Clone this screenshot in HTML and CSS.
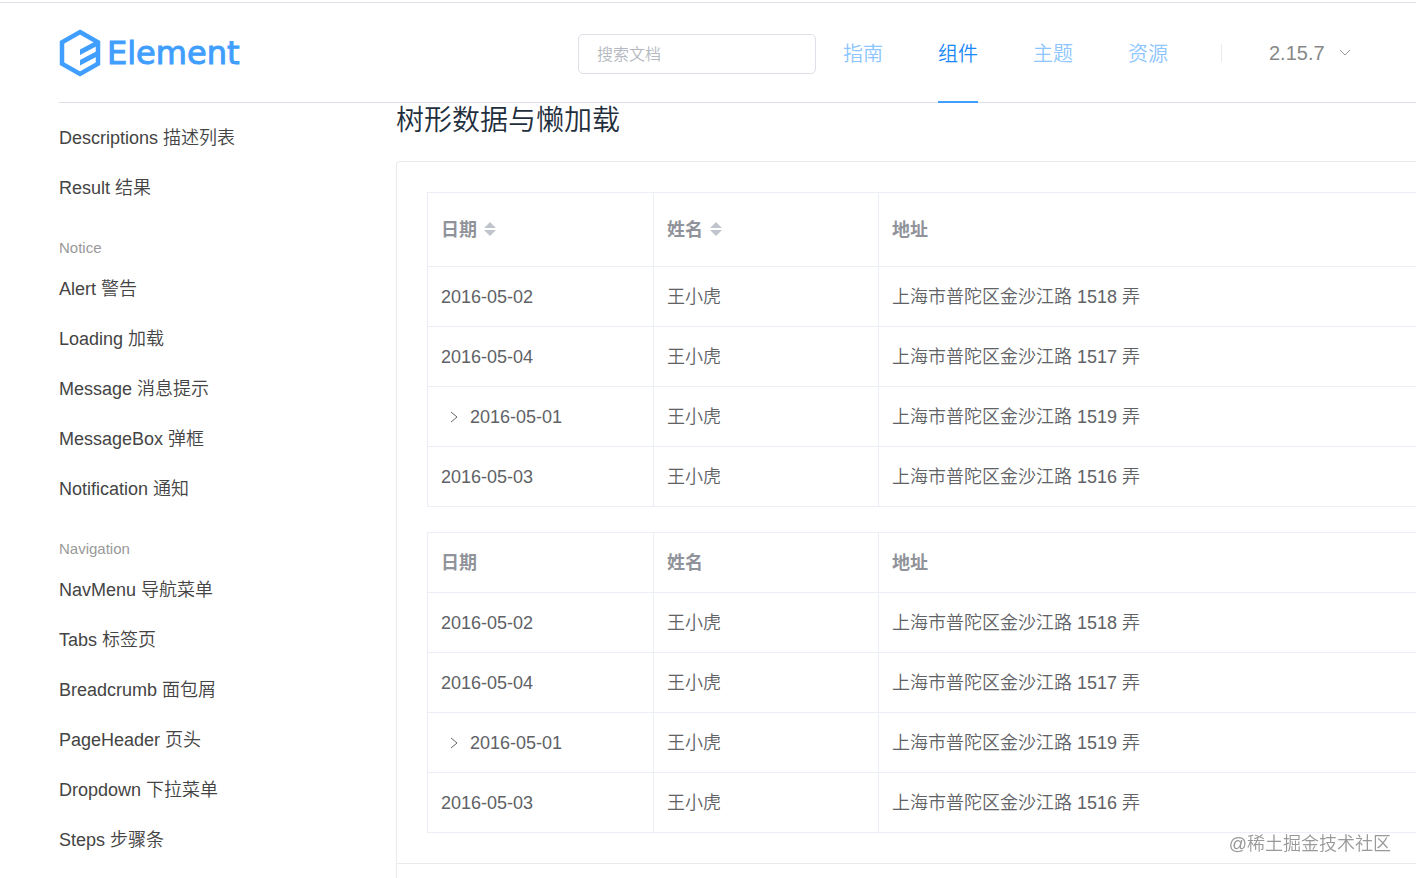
FILE: index.html
```html
<!DOCTYPE html>
<html lang="zh-CN">
<head>
    <meta charset="UTF-8">
    <meta name="viewport" content="width=device-width, initial-scale=1.0">
    <title>Element - 组件</title>
    <link rel="stylesheet" href="styles.css">
</head>
<body>
    <header class="header">
        <a href="#" class="logo">
            <svg class="logo-mark" width="42" height="48" viewBox="0 0 42 48" fill="#409eff">
                <path d="M21 3 L39 13.200 V34.800 L21 45 L3 34.800 V13.200 Z" fill="none" stroke="#409eff" stroke-width="4.500"/>
                <path d="M21 20.500 L38 11.500 V17 L21 26 Z M21 31 L38 22 V27.500 L21 36.500 Z"/>
            </svg>
            <span class="logo-text">Element</span>
        </a>
        <input type="text" class="search" placeholder="搜索文档" aria-label="搜索文档">
        <nav class="nav">
            <a href="#">指南</a>
            <a href="#" class="active">组件</a>
            <a href="#">主题</a>
            <a href="#">资源</a>
        </nav>
        <div class="version">
            <select aria-label="版本">
                <option>2.15.7</option>
            </select>
            <svg width="12" height="8" viewBox="0 0 12 8" fill="none" stroke="#999"><path d="M1 1 L6 6 L11 1"/></svg>
        </div>
    </header>

    <div class="container">
        <aside class="side-nav">
            <ul>
                <li><a href="#">Descriptions 描述列表</a></li>
                <li><a href="#">Result 结果</a></li>
            </ul>
            <div class="group-title">Notice</div>
            <ul>
                <li><a href="#">Alert 警告</a></li>
                <li><a href="#">Loading 加载</a></li>
                <li><a href="#">Message 消息提示</a></li>
                <li><a href="#">MessageBox 弹框</a></li>
                <li><a href="#">Notification 通知</a></li>
            </ul>
            <div class="group-title">Navigation</div>
            <ul>
                <li><a href="#">NavMenu 导航菜单</a></li>
                <li><a href="#">Tabs 标签页</a></li>
                <li><a href="#">Breadcrumb 面包屑</a></li>
                <li><a href="#">PageHeader 页头</a></li>
                <li><a href="#">Dropdown 下拉菜单</a></li>
                <li><a href="#">Steps 步骤条</a></li>
            </ul>
        </aside>

        <main class="content">
            <h3>树形数据与懒加载</h3>
            <div class="demo-block">
                <div class="source">
                    <table class="table sortable">
                        <thead>
                            <tr>
                                <th class="col-date">日期 <button type="button" class="sort" aria-label="按日期排序"><svg width="12" height="14" viewBox="0 0 12 14" fill="#c0c4cc"><path d="M6 0 L12 6 H0 Z M0 8 H12 L6 14 Z"/></svg></button></th>
                                <th class="col-name">姓名 <button type="button" class="sort" aria-label="按姓名排序"><svg width="12" height="14" viewBox="0 0 12 14" fill="#c0c4cc"><path d="M6 0 L12 6 H0 Z M0 8 H12 L6 14 Z"/></svg></button></th>
                                <th>地址</th>
                            </tr>
                        </thead>
                        <tbody>
                            <tr><td>2016-05-02</td><td>王小虎</td><td>上海市普陀区金沙江路 1518 弄</td></tr>
                            <tr><td>2016-05-04</td><td>王小虎</td><td>上海市普陀区金沙江路 1517 弄</td></tr>
                            <tr>
                                <td><button type="button" class="expand" aria-label="展开"><svg width="8" height="12" viewBox="0 0 8 12" fill="none" stroke="#666"><path d="M1 1 L7 6 L1 11"/></svg></button>2016-05-01</td>
                                <td>王小虎</td>
                                <td>上海市普陀区金沙江路 1519 弄</td>
                            </tr>
                            <tr><td>2016-05-03</td><td>王小虎</td><td>上海市普陀区金沙江路 1516 弄</td></tr>
                        </tbody>
                    </table>

                    <table class="table">
                        <thead>
                            <tr>
                                <th class="col-date">日期</th>
                                <th class="col-name">姓名</th>
                                <th>地址</th>
                            </tr>
                        </thead>
                        <tbody>
                            <tr><td>2016-05-02</td><td>王小虎</td><td>上海市普陀区金沙江路 1518 弄</td></tr>
                            <tr><td>2016-05-04</td><td>王小虎</td><td>上海市普陀区金沙江路 1517 弄</td></tr>
                            <tr>
                                <td><button type="button" class="expand" aria-label="展开"><svg width="8" height="12" viewBox="0 0 8 12" fill="none" stroke="#666"><path d="M1 1 L7 6 L1 11"/></svg></button>2016-05-01</td>
                                <td>王小虎</td>
                                <td>上海市普陀区金沙江路 1519 弄</td>
                            </tr>
                            <tr><td>2016-05-03</td><td>王小虎</td><td>上海市普陀区金沙江路 1516 弄</td></tr>
                        </tbody>
                    </table>
                </div>
            </div>
        </main>
    </div>

    <div class="watermark">@稀土掘金技术社区</div>
</body>
</html>
```
FILE: styles.css
```css
* {
    margin: 0;
    padding: 0;
    box-sizing: border-box;
}

body {
    font-family: "Liberation Sans", "Noto Sans CJK SC", sans-serif;
    font-size: 18px;
    font-weight: 350;
    color: #606266;
    background: #fff;
    min-height: 100vh;
    padding-top: 2px;
    display: flex;
    flex-direction: column;
}

a {
    text-decoration: none;
}

button {
    background: none;
    border: none;
    cursor: pointer;
}

ul {
    list-style: none;
}

/* header */
.header {
    display: flex;
    align-items: center;
    height: 101px;
    padding-right: 65px;
    margin-left: 59px;
    box-shadow: inset 0 -1px #dcdfe6;
}

body::before {
    content: "";
    height: 1px;
    margin-bottom: -1px;
    background: #dcdfe6;
}

.logo {
    display: flex;
    align-items: center;
    gap: 6px;
    margin-right: auto;
}

.logo-text {
    font-family: "DejaVu Sans", sans-serif;
    font-size: 32px;
    font-weight: 400;
    line-height: 48px;
    color: #409eff;
    -webkit-text-stroke: 1px #409eff;
}

.search {
    width: 238px;
    height: 40px;
    padding: 2px 18px 0;
    margin-top: 2px;
    margin-right: 27px;
    border: 1px solid #dcdfe6;
    border-radius: 5px;
    font: inherit;
    font-size: 16px;
    outline: none;
}

.search::placeholder {
    color: #b4b8c0;
}

.nav {
    display: flex;
    align-self: stretch;
    gap: 55px;
}

.nav a {
    display: flex;
    align-items: center;
    padding-top: 2px;
    border-bottom: 2px solid transparent;
    font-size: 20px;
    color: #8cc5ff;
}

.nav a.active {
    color: #1989fa;
    border-color: #409eff;
}

.version {
    display: grid;
    align-items: center;
    margin-left: 53px;
    padding-left: 48px;
    background: linear-gradient(#ebebeb, #ebebeb) left center / 1px 18px no-repeat;
}

.version select,
.version svg {
    grid-area: 1 / 1;
}

.version select {
    appearance: none;
    width: 82px;
    border: none;
    background: none;
    font: inherit;
    font-size: 20px;
    color: #888;
}

.version svg {
    justify-self: end;
    pointer-events: none;
}

/* layout */
.container {
    display: flex;
    flex: 1;
    margin-left: 59px;
}

.side-nav {
    flex: 0 0 337px;
    padding-top: 10px;
}

.side-nav a {
    display: block;
    line-height: 50px;
    color: #444;
}

.group-title {
    margin-top: 19px;
    font-size: 15px;
    line-height: 32px;
    color: #999;
}

.content {
    flex: 1;
    display: flex;
    flex-direction: column;
    min-width: 0;
}

.content h3 {
    margin-bottom: 22px;
    font-size: 28px;
    font-weight: 350;
    line-height: 36px;
    color: #1f2f3d;
}

.demo-block {
    flex: 1;
    border: 1px solid #ebebeb;
    border-width: 1px 0 0 1px;
    border-top-left-radius: 4px;
}

.source {
    display: grid;
    gap: 25px;
    padding: 30px 0 30px 30px;
    border-bottom: 1px solid #ebebeb;
}

/* tables */
.table {
    width: 100%;
    table-layout: fixed;
    border-spacing: 0;
    border: 1px solid #ebeef5;
    border-width: 1px 0 0 1px;
}

.table th,
.table td {
    height: 60px;
    padding: 0 13px;
    border: 1px solid #ebeef5;
    border-width: 0 1px 1px 0;
    line-height: 24px;
    text-align: left;
    white-space: nowrap;
}

.table th:last-child,
.table td:last-child {
    border-right: none;
}

.table th {
    font-weight: 700;
    color: #909399;
}

.table .col-date {
    width: 226px;
}

.table .col-name {
    width: 225px;
}

.sortable th {
    height: 74px;
}

.sort {
    margin-left: 2px;
}

.sort svg {
    display: block;
}

.expand {
    width: 25px;
    margin-right: 4px;
}

.watermark {
    position: fixed;
    right: 25px;
    bottom: 22px;
    line-height: 24px;
    color: #999;
    text-shadow: 1px 1px #fff;
}
```
